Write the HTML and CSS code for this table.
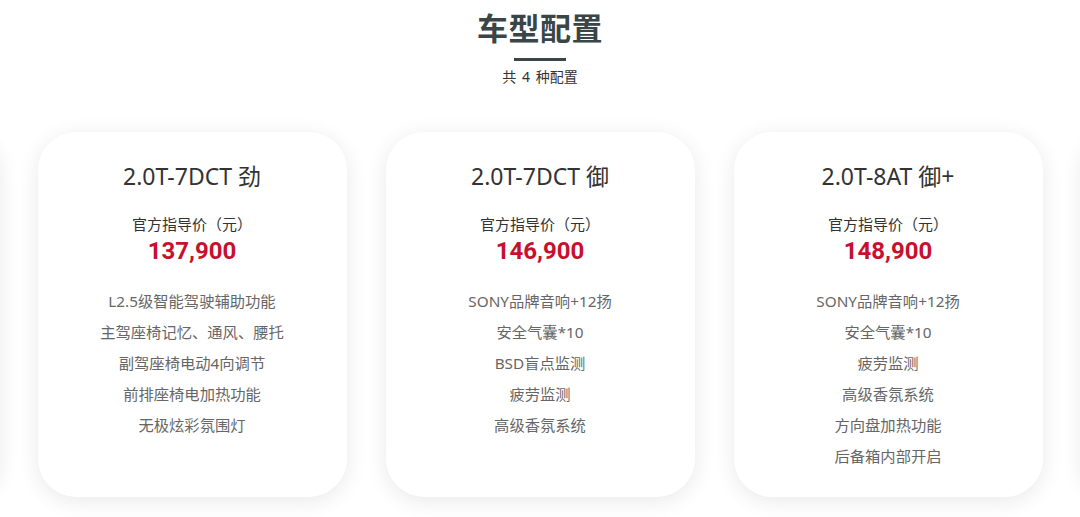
FILE: index.html
```html
<!DOCTYPE html>
<html lang="zh-CN">
<head>
<meta charset="utf-8">
<title>车型配置</title>
<link rel="stylesheet" href="styles.css">
</head>
<body>
<section class="section">
  <header class="head">
    <h1 class="title">车型配置</h1>
    <div class="bar"></div>
    <p class="sub">共 4 种配置</p>
  </header>
  <div class="track">
    <div class="card card-hidden">
      <h2 class="name">2.0T-7DCT 智</h2>
      <p class="label">官方指导价（元）</p>
      <p class="price">127,900</p>
      <ul class="feats"><li>LED大灯</li></ul>
    </div>
    <div class="card">
      <h2 class="name">2.0T-7DCT 劲</h2>
      <p class="label">官方指导价（元）</p>
      <p class="price">137,900</p>
      <ul class="feats">
        <li>L2.5级智能驾驶辅助功能</li>
        <li>主驾座椅记忆、通风、腰托</li>
        <li>副驾座椅电动4向调节</li>
        <li>前排座椅电加热功能</li>
        <li>无极炫彩氛围灯</li>
      </ul>
    </div>
    <div class="card">
      <h2 class="name">2.0T-7DCT 御</h2>
      <p class="label">官方指导价（元）</p>
      <p class="price">146,900</p>
      <ul class="feats">
        <li>SONY品牌音响+12扬</li>
        <li>安全气囊*10</li>
        <li>BSD盲点监测</li>
        <li>疲劳监测</li>
        <li>高级香氛系统</li>
      </ul>
    </div>
    <div class="card">
      <h2 class="name">2.0T-8AT 御+</h2>
      <p class="label">官方指导价（元）</p>
      <p class="price">148,900</p>
      <ul class="feats">
        <li>SONY品牌音响+12扬</li>
        <li>安全气囊*10</li>
        <li>疲劳监测</li>
        <li>高级香氛系统</li>
        <li>方向盘加热功能</li>
        <li>后备箱内部开启</li>
      </ul>
    </div>
    <div class="card card-hidden">
      <h2 class="name">2.0T-8AT 尊</h2>
      <p class="label">官方指导价（元）</p>
      <p class="price">158,900</p>
      <ul class="feats"><li>全景天窗</li></ul>
    </div>
  </div>
</section>
</body>
</html>
```
FILE: styles.css
```css
* { box-sizing: border-box; }
html, body {
  margin: 0;
  padding: 0;
  background: #ffffff;
}
body {
  font-family: "Noto Sans", "Noto Sans CJK SC", sans-serif;
  width: 1080px;
  height: 517px;
  overflow: hidden;
}
.section {
  width: 1080px;
  overflow: hidden;
}
.head {
  display: flex;
  flex-direction: column;
  align-items: center;
  padding-top: 5px;
}
.title {
  margin: 0;
  font-family: "Noto Sans CJK SC", sans-serif;
  font-size: 31px;
  line-height: 44px;
  font-weight: 700;
  color: #3a4548;
  letter-spacing: 0.5px;
}
.bar {
  width: 52px;
  height: 3px;
  margin-top: 9px;
  background: #3a4548;
}
.sub {
  margin: 6px 0 0;
  font-size: 14px;
  line-height: 20px;
  color: #333;
  word-spacing: 2px;
}
.track {
  display: flex;
  justify-content: center;
  gap: 39px;
  margin-top: 45px;
  padding-bottom: 20px;
}
.card {
  flex: 0 0 309px;
  height: 365px;
  background: #fff;
  border-radius: 38px;
  box-shadow: 0 4px 22px rgba(0, 0, 0, 0.09);
  padding-top: 29px;
  display: flex;
  flex-direction: column;
  align-items: center;
  text-align: center;
}
.card-hidden > * { visibility: hidden; }
.name {
  margin: 0;
  font-size: 23px;
  line-height: 30px;
  font-weight: 400;
  color: #333;
}
.label {
  margin: 22px 0 0;
  font-size: 15px;
  line-height: 22px;
  color: #333;
}
.price {
  margin: 1px 0 0;
  font-family: Roboto, "Noto Sans CJK SC", sans-serif;
  font-size: 24px;
  line-height: 30px;
  font-weight: 700;
  color: #c8102e;
}
.feats {
  list-style: none;
  margin: 20px 0 0;
  padding: 0;
}
.feats li {
  font-size: 15.3px;
  line-height: 31px;
  color: #666;
}
```
